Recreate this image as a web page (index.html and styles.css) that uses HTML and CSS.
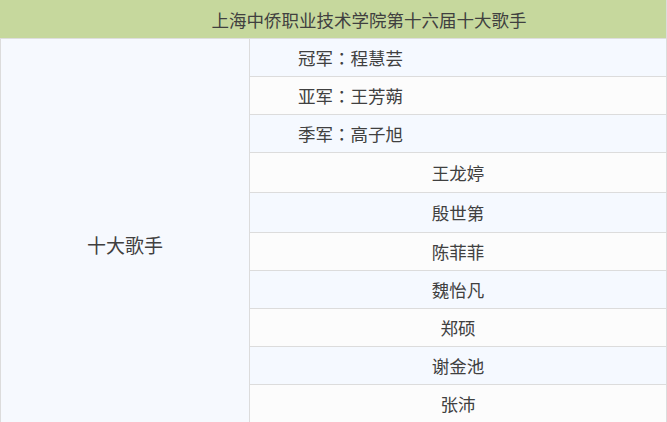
FILE: index.html
```html
<!DOCTYPE html>
<html lang="zh">
<head>
<meta charset="utf-8">
<title>十大歌手</title>
<link rel="stylesheet" href="styles.css">
</head>
<body>
<div class="table">
  <div class="title">上海中侨职业技术学院第十六届十大歌手</div>
  <div class="body">
    <div class="group">十大歌手</div>
    <div class="list">
      <div class="row odd award">冠军<span class="colon">：</span>程慧芸</div>
      <div class="row even award">亚军<span class="colon">：</span>王芳蒴</div>
      <div class="row odd award">季军<span class="colon">：</span>高子旭</div>
      <div class="row even tall">王龙婷</div>
      <div class="row odd tall">殷世第</div>
      <div class="row even">陈菲菲</div>
      <div class="row odd">魏怡凡</div>
      <div class="row even">郑硕</div>
      <div class="row odd">谢金池</div>
      <div class="row even">张沛</div>
    </div>
  </div>
</div>
</body>
</html>
```

FILE: styles.css
```css
html, body {
  margin: 0;
  padding: 0;
  background: #ffffff;
}
body {
  font-family: "Noto Sans CJK SC", "Noto Sans", sans-serif;
  font-size: 17.5px;
  color: #404040;
}
.table {
  width: 666px;
  border-right: 1px solid #dcdcdc;
}
.title {
  background: #c6d89d;
  border-bottom: 1px solid #dedede;
  display: flex;
  align-items: center;
  justify-content: center;
  padding-left: 72px;
  box-sizing: border-box;
  height: 39px;
}
.body {
  display: flex;
  border-left: 1px solid #dcdcdc;
}
.group {
  width: 248px;
  flex: none;
  background: #f6f9fe;
  border-right: 1px solid #dcdcdc;
  display: flex;
  align-items: center;
  justify-content: center;
  padding-top: 26px;
  font-size: 19px;
}
.list {
  flex: 1;
  display: flex;
  flex-direction: column;
}
.row {
  height: 38px;
  box-sizing: border-box;
  border-bottom: 1px solid #dcdcdc;
  display: flex;
  align-items: center;
  justify-content: center;
}
.row.tall {
  height: 40px;
}
.row.award {
  justify-content: flex-start;
  padding-left: 48px;
}
.colon {
  font-family: "Noto Sans CJK TC", "Noto Sans CJK SC", sans-serif;
}
.odd {
  background: #f5f9ff;
}
.even {
  background: #fcfcfc;
}
```
